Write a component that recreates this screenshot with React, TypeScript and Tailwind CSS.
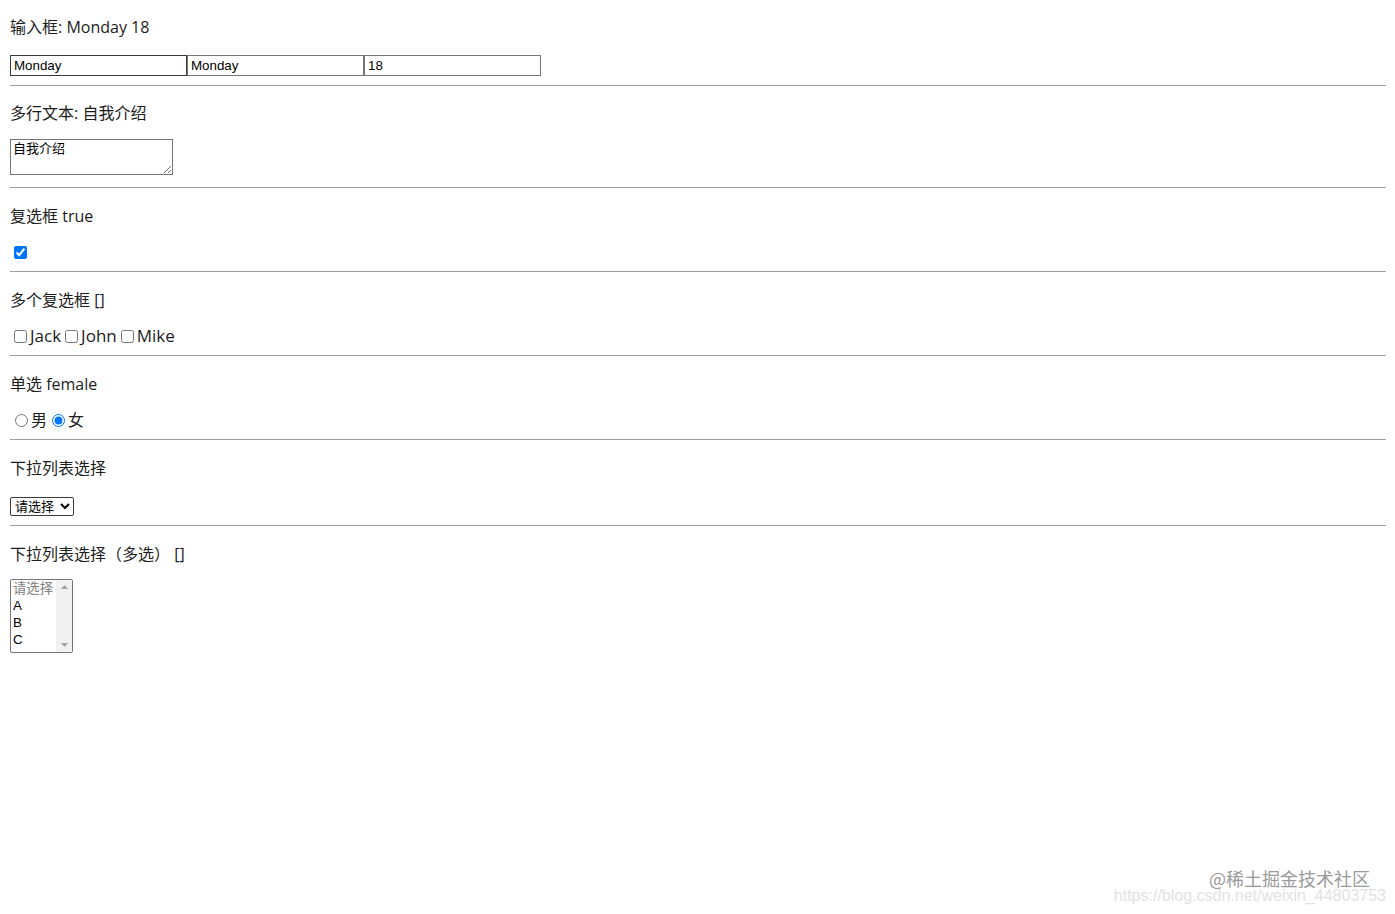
import { useState } from 'react';

const label = 'text-[16px] leading-[22px] text-[#1c1c1c]';
const font = { fontFamily: '"Open Sans", "Noto Sans CJK SC", sans-serif' };

function MultiList({ options }: { options: string[] }) {
  const [sel, setSel] = useState<string[]>([]);
  return (
    <div
      role="listbox"
      aria-multiselectable
      className="flex h-[74px] w-[63px] rounded-[2px] border border-[#767676] font-['Liberation_Sans','Noto_Sans_CJK_SC',sans-serif] text-[13.33px] text-black"
    >
      <div className="flex flex-1 flex-col overflow-hidden">
        <div className="h-[17px] pl-[2px] leading-[17px] text-[#808080]">请选择</div>
        {options.map(o => (
          <div
            key={o}
            role="option"
            aria-selected={sel.includes(o)}
            onClick={() => setSel(p => (p.includes(o) ? p.filter(x => x !== o) : [...p, o]))}
            className={`h-[17px] pl-[2px] leading-[17px] ${sel.includes(o) ? 'bg-[#cecece]' : ''}`}
          >
            {o}
          </div>
        ))}
      </div>
      <div className="flex w-[16px] flex-col items-center justify-between bg-[#f1f1f1] py-[5px]">
        <svg width="7" height="4" viewBox="0 0 7 4">
          <path d="M0 4 L3.5 0 L7 4 Z" fill="#a3a3a3" />
        </svg>
        <svg width="7" height="4" viewBox="0 0 7 4">
          <path d="M0 0 L3.5 4 L7 0 Z" fill="#a3a3a3" />
        </svg>
      </div>
    </div>
  );
}

export default function App() {
  const [name, setName] = useState('Monday');
  const [age, setAge] = useState('18');
  const [intro, setIntro] = useState('自我介绍');
  const [checked, setChecked] = useState(true);
  const [names, setNames] = useState<string[]>([]);
  const [sex, setSex] = useState('female');
  const [pick, setPick] = useState('');

  const toggleName = (n: string) => {
    setNames(prev => (prev.includes(n) ? prev.filter(x => x !== n) : [...prev, n]));
  };

  return (
    <div className="relative h-[914px] w-[1395px] bg-white pl-[10px] pr-[9px]" style={font}>
      {/* 输入框 */}
      <p className={`${label} pt-[16px]`}>输入框: {name} {age}</p>
      <div className="mt-[17px] flex h-[21px] font-['Liberation_Sans','Noto_Sans_CJK_SC',sans-serif] text-[13.33px] text-black">
        <input
          value={name}
          onChange={e => setName(e.target.value)}
          className="h-[21px] w-[177px] border border-[#3b3b3b] pl-[3px] outline-none"
        />
        <input
          value={name}
          onChange={e => setName(e.target.value)}
          className="h-[21px] w-[177px] border border-[#767676] pl-[3px] outline-none"
        />
        <input
          value={age}
          onChange={e => setAge(e.target.value)}
          className="h-[21px] w-[177px] border border-[#767676] pl-[3px] outline-none"
        />
      </div>
      <hr className="mt-[9px] border-t border-[#a0a0a0]" />

      {/* 多行文本 */}
      <p className={`${label} mt-[16px]`}>多行文本: {intro}</p>
      <div className="mt-[15px] flex h-[36px]">
        <textarea
          value={intro}
          onChange={e => setIntro(e.target.value)}
          className="h-[36px] w-[163px] resize border border-[#767676] px-[2px] py-[1px] font-['DejaVu_Sans_Mono','Noto_Sans_CJK_SC',monospace] text-[13px] leading-[16px] text-black outline-none"
        />
      </div>
      <hr className="mt-[12px] border-t border-[#a0a0a0]" />

      {/* 复选框 */}
      <p className={`${label} mt-[17px]`}>复选框 {String(checked)}</p>
      <div className="mt-[14px] flex h-[22px] items-center">
        <input
          type="checkbox"
          checked={checked}
          onChange={e => setChecked(e.target.checked)}
          className="ml-[4px] h-[13px] w-[13px]"
        />
      </div>
      <hr className="mt-[8px] border-t border-[#a0a0a0]" />

      {/* 多个复选框 */}
      <p className={`${label} mt-[17px]`}>多个复选框 {JSON.stringify(names)}</p>
      <div className="mt-[14px] flex h-[22px] items-center text-[17px] leading-[22px] text-[#1c1c1c]">
        {['Jack', 'John', 'Mike'].map(n => (
          <label key={n} className="flex items-center">
            <input
              type="checkbox"
              checked={names.includes(n)}
              onChange={() => toggleName(n)}
              className="ml-[4px] mr-[3px] h-[13px] w-[13px]"
            />
            <span>{n}</span>
          </label>
        ))}
      </div>
      <hr className="mt-[8px] border-t border-[#a0a0a0]" />

      {/* 单选 */}
      <p className={`${label} mt-[17px]`}>单选 {sex}</p>
      <div className={`${label} mt-[14px] flex h-[22px] items-center`}>
        <label className="flex items-center">
          <input
            type="radio"
            name="sex"
            checked={sex === 'male'}
            onChange={() => setSex('male')}
            className="ml-[5px] mr-[3px] h-[13px] w-[13px]"
          />
          <span>男</span>
        </label>
        <label className="flex items-center">
          <input
            type="radio"
            name="sex"
            checked={sex === 'female'}
            onChange={() => setSex('female')}
            className="ml-[5px] mr-[3px] h-[13px] w-[13px]"
          />
          <span>女</span>
        </label>
      </div>
      <hr className="mt-[8px] border-t border-[#a0a0a0]" />

      {/* 下拉列表 */}
      <p className={`${label} mt-[17px]`}>下拉列表选择</p>
      <div className="mt-[18px] flex h-[19px] items-center">
        <select
          value={pick}
          onChange={e => setPick(e.target.value)}
          className="h-[19px] w-[64px] rounded-[2px] border border-[#3b3b3b] py-0 pl-0 font-['Liberation_Sans','Noto_Sans_CJK_SC',sans-serif] text-[13px] leading-[15px] text-black"
        >
          <option value="">请选择</option>
          <option value="A">A</option>
          <option value="B">B</option>
          <option value="C">C</option>
        </select>
      </div>
      <hr className="mt-[9px] border-t border-[#a0a0a0]" />

      {/* 下拉列表（多选） */}
      <p className={`${label} mt-[17px]`}>下拉列表选择（多选） []</p>
      <div className="mt-[14px]">
        <MultiList options={['A', 'B', 'C']} />
      </div>

      {/* watermark */}
      <div className="absolute bottom-[10px] right-[9px] flex flex-col items-end">
        <span className="mr-[16px] font-['Noto_Sans_CJK_SC',sans-serif] text-[18px] leading-[20px] text-[#9a9a9a]">@稀土掘金技术社区</span>
        <span className="font-['Liberation_Sans',sans-serif] text-[16px] leading-[16px] text-[#e2e2e2]">https://blog.csdn.net/weixin_44803753</span>
      </div>
    </div>
  );
}
